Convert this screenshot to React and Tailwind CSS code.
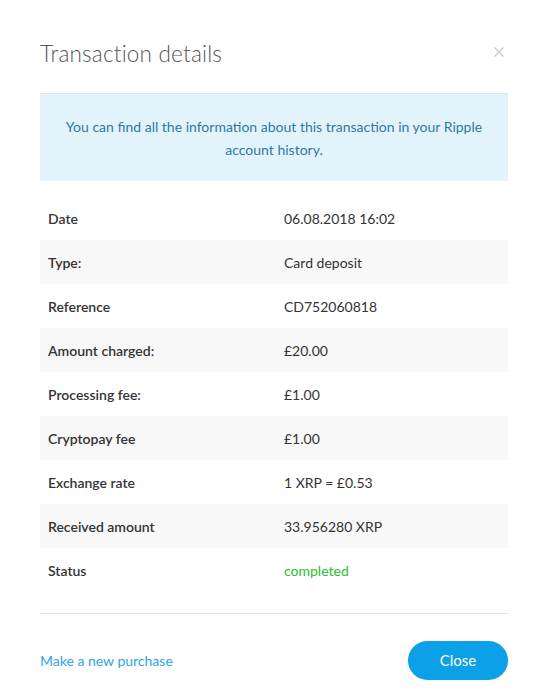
import React from "react";

const rows = [
  { label: "Date", value: "06.08.2018 16:02" },
  { label: "Type:", value: "Card deposit" },
  { label: "Reference", value: "CD752060818" },
  { label: "Amount charged:", value: "£20.00" },
  { label: "Processing fee:", value: "£1.00" },
  { label: "Cryptopay fee", value: "£1.00" },
  { label: "Exchange rate", value: "1 XRP = £0.53" },
  { label: "Received amount", value: "33.956280 XRP" },
  { label: "Status", value: "completed", status: true },
];

function App() {
  return (
    <div
      className="w-[550px] h-[692px] bg-white pl-10 pr-[42px] pt-[38px]"
      style={{ fontFamily: "Lato, 'Open Sans', sans-serif" }}
    >
      <div className="flex items-start justify-between h-[55px]">
        <h1 className="text-[22.5px] font-light text-[#555] leading-8 tracking-[0.2px]">
          Transaction details
        </h1>
        <button className="mt-[9px] mr-[4px] text-[#c8c8c8]">
          <svg width="10" height="10" viewBox="0 0 10 10">
            <path d="M0.5 0.5L9.5 9.5M9.5 0.5L0.5 9.5" stroke="currentColor" strokeWidth="1.1" />
          </svg>
        </button>
      </div>

      <div className="border-t border-[#dde3e6] bg-[#e3f3fb] h-[88px] flex items-center justify-center px-4">
        <p className="text-center text-[14px] leading-[23px] text-[#2b7ba3]">
          You can find all the information about this transaction in your Ripple
          <br />
          account history.
        </p>
      </div>

      <div className="mt-[15px]">
        {rows.map((row, i) => (
          <div
            key={row.label}
            className={
              "flex items-center h-[44px] text-[14px] " +
              (i % 2 === 1 ? "bg-[#f8f8f8]" : "bg-white")
            }
          >
            <div className="w-[244px] pl-2 font-semibold text-[#333]">{row.label}</div>
            <div className={row.status ? "text-[#2cc02c]" : "text-[#333]"}>{row.value}</div>
          </div>
        ))}
      </div>

      <div className="mt-[21px] border-t border-[#e2e2e2]" />

      <div className="flex items-center justify-between mt-[27px]">
        <a href="#" className="text-[14px] text-[#2ea5e6] mt-[-1px]">
          Make a new purchase
        </a>
        <button className="w-[100px] h-[39px] rounded-full bg-[#0ba0e8] text-white text-[15px]">
          Close
        </button>
      </div>
    </div>
  );
}

export default App;
